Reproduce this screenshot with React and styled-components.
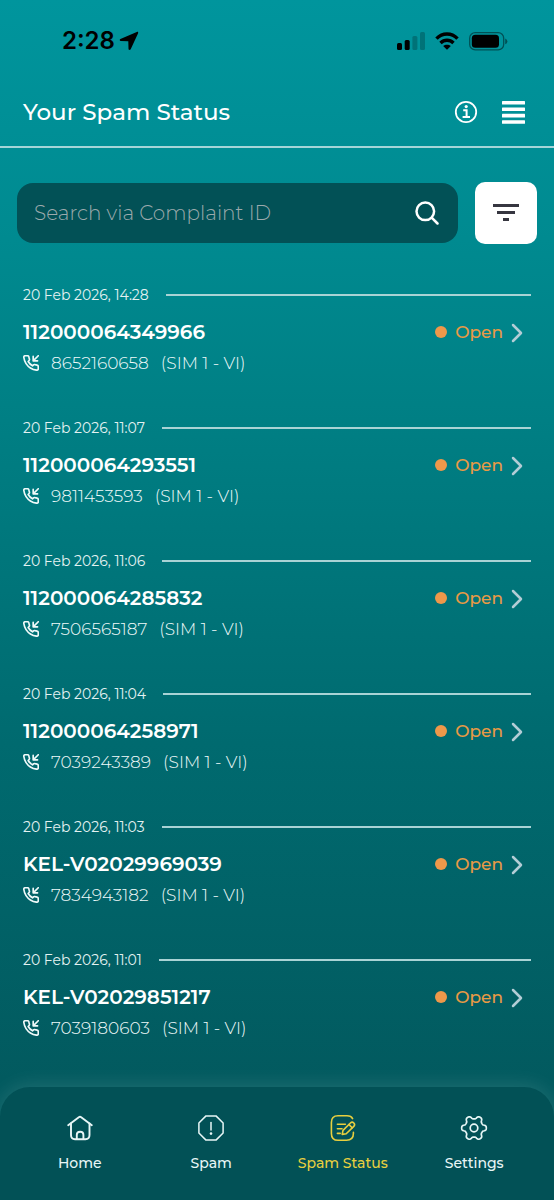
import React from 'react';
import styled, { createGlobalStyle } from 'styled-components';

const complaints = [
  { id: '112000064349966', date: '20 Feb 2026, 14:28', phone: '8652160658' },
  { id: '112000064293551', date: '20 Feb 2026, 11:07', phone: '9811453593' },
  { id: '112000064285832', date: '20 Feb 2026, 11:06', phone: '7506565187' },
  { id: '112000064258971', date: '20 Feb 2026, 11:04', phone: '7039243389' },
  { id: 'KEL-V02029969039', date: '20 Feb 2026, 11:03', phone: '7834943182' },
  { id: 'KEL-V02029851217', date: '20 Feb 2026, 11:01', phone: '7039180603' },
];

const LocationIcon = () => (
  <svg width="20" height="20" viewBox="0 0 20 20" aria-hidden="true">
    <path d="M17.8 0.9 L1.4 8 C0.3 8.6 0.6 10.1 1.8 10.1 L9.3 10.3 L9.5 17.8 C9.6 19.2 11.1 19.4 11.7 18.2 L19.1 2.2 C19.5 1.2 18.8 0.5 17.8 0.9 Z" />
  </svg>
);

const SignalIcon = () => (
  <svg width="28" height="18" viewBox="0 0 28 18" aria-hidden="true">
    <rect x="0" y="11" width="5" height="7" rx="1.5" />
    <rect x="7.7" y="8" width="5" height="10" rx="1.5" />
    <g opacity="0.22">
      <rect x="15.4" y="4" width="5" height="14" rx="1.5" />
      <rect x="23" y="0" width="5" height="18" rx="1.5" />
    </g>
  </svg>
);

const WifiIcon = () => (
  <svg width="24" height="18" viewBox="0 0 24 18" aria-hidden="true">
    <g fill="none" stroke="#000" strokeWidth="3.4">
      <path d="M1.5 6.7 C7.4 0.5 16.6 0.5 22.5 6.7" />
      <path d="M5.5 11 C9.3 7.3 14.7 7.3 18.5 11" />
    </g>
    <path d="M8.2 14 C10.2 12.2 13.8 12.2 15.8 14 L12.6 17.3 Q12 17.9 11.4 17.3 Z" />
  </svg>
);

const BatteryIcon = () => (
  <svg width="39" height="19" viewBox="0 0 39 19" aria-hidden="true">
    <rect x="0.7" y="0.7" width="34" height="17.2" rx="5.5" fill="none" stroke="#000" strokeWidth="1.3" opacity="0.45" />
    <rect x="2.8" y="2.8" width="27.2" height="13" rx="3.5" />
    <path d="M36.2 6.5 Q38.4 7.4 38.4 9.4 Q38.4 11.4 36.2 12.2 Z" opacity="0.45" />
  </svg>
);

const InfoIcon = () => (
  <svg width="24" height="24" viewBox="0 0 24 24" fill="none" stroke="#fff" aria-hidden="true">
    <circle cx="12" cy="12" r="10.2" strokeWidth="1.8" />
    <path d="M9.2 10.3 H12.6 V16.6 M8.6 17 H16" strokeWidth="2" />
    <circle cx="12.2" cy="6.6" r="1.6" fill="#fff" stroke="none" />
  </svg>
);

const MenuIcon = () => (
  <svg width="24" height="24" viewBox="0 0 24 24" fill="#fff" aria-hidden="true">
    <rect x="1" y="1" width="23" height="3.6" rx="0.5" />
    <rect x="1" y="7.4" width="23" height="3.6" rx="0.5" />
    <rect x="1" y="13.8" width="23" height="3.6" rx="0.5" />
    <rect x="1" y="20.2" width="23" height="3.6" rx="0.5" />
  </svg>
);

const SearchIcon = () => (
  <svg width="24" height="24" viewBox="0 0 24 24" fill="none" stroke="#fff" strokeWidth="2.5" strokeLinecap="round" aria-hidden="true">
    <circle cx="10.3" cy="10.3" r="8.8" />
    <path d="M16.9 16.9 L22.5 22.5" />
  </svg>
);

const FilterIcon = () => (
  <svg width="26" height="18" viewBox="0 0 26 18" fill="#363640" aria-hidden="true">
    <rect x="0" y="0" width="26" height="3" />
    <rect x="4" y="7" width="18" height="3" />
    <rect x="10" y="14" width="6" height="3" />
  </svg>
);

const IncomingCallIcon = () => (
  <svg width="16" height="16" viewBox="1 1 22 22" fill="none" stroke="currentColor" strokeWidth="2.3" strokeLinecap="round" strokeLinejoin="round" aria-hidden="true">
    <path d="M22 2 L15 9 M15 3 V9 H21" />
    <path d="M22 16.9v3a2 2 0 0 1-2.2 2 19.8 19.8 0 0 1-8.6-3.1 19.5 19.5 0 0 1-6-6 19.8 19.8 0 0 1-3.1-8.7A2 2 0 0 1 4.1 2h3a2 2 0 0 1 2 1.7c.1 1 .4 1.9.7 2.8a2 2 0 0 1-.5 2.1L8.1 9.9a16 16 0 0 0 6 6l1.3-1.3a2 2 0 0 1 2.1-.4c.9.3 1.8.6 2.8.7a2 2 0 0 1 1.7 2z" />
  </svg>
);

const ChevronIcon = () => (
  <svg width="12" height="22" viewBox="0 0 12 22" fill="none" stroke="#b3cdd6" strokeWidth="2.5" strokeLinecap="round" strokeLinejoin="round" aria-hidden="true">
    <path d="M2 4 L10 12 L2 20" />
  </svg>
);

const HomeIcon = () => (
  <svg width="28" height="28" viewBox="0 0 28 28" fill="none" stroke="currentColor" strokeWidth="1.9" strokeLinecap="round" strokeLinejoin="round" aria-hidden="true">
    <path d="M2.2 11.2 L12.8 3.2 Q14 2.4 15.2 3.2 L25.8 11.2" />
    <path d="M5 9.5 V21 Q5 25.2 9 25.2 H19.5 Q23.5 25.2 23.5 21 V9.5" />
    <path d="M10.8 25 V20.8 Q10.8 17.8 14.2 17.8 Q17.4 17.8 17.4 20.8 V25" />
  </svg>
);

const SpamIcon = () => (
  <svg width="28" height="28" viewBox="0 0 28 28" fill="none" stroke="currentColor" strokeWidth="1.5" strokeLinejoin="round" aria-hidden="true">
    <path d="M9 1.9 H19 L26.1 9 V19 L19 26.1 H9 L1.9 19 V9 Z" />
    <path d="M14 8.4 V16" strokeLinecap="round" />
    <circle cx="14" cy="19.6" r="1.3" fill="currentColor" stroke="none" />
  </svg>
);

const StatusIcon = () => (
  <svg width="28" height="28" viewBox="0 0 28 28" fill="none" stroke="currentColor" strokeWidth="1.6" strokeLinecap="round" strokeLinejoin="round" aria-hidden="true">
    <path d="M23.6 4.6 Q22.2 1.8 18 1.8 H9 Q2.4 1.8 2.4 8.6 V19.4 Q2.4 26.2 9 26.2 H17.6 Q24.4 26.2 24.4 19.6 V18.4" />
    <path d="M8.4 10.2 H16.4 M8.4 14.8 H13 M8.4 19.4 H11.2" />
    <path d="M13.2 20.4 L14 16.4 L21.4 9 Q23.2 7.4 24.8 9 Q26.4 10.6 24.8 12.4 L17.2 19.8 Z" />
    <path d="M20 10.6 L23.2 13.8" />
  </svg>
);

// six rounded teeth, flattened at the crest and the root
const gearPoints = Array.from({ length: 120 }, (_, i) => {
  const angle = (i * Math.PI) / 60;
  const radius = 10.7 + 1.7 * Math.tanh(1.8 * Math.cos(6 * angle));
  return `${(14 + radius * Math.cos(angle)).toFixed(2)},${(14 + radius * Math.sin(angle)).toFixed(2)}`;
}).join(' ');

const SettingsIcon = () => (
  <svg width="28" height="28" viewBox="0 0 28 28" fill="none" stroke="currentColor" strokeWidth="1.7" strokeLinejoin="round" aria-hidden="true">
    <polygon points={gearPoints} />
    <circle cx="14" cy="14" r="3.8" />
  </svg>
);

const tabs = [
  { label: 'Home', icon: <HomeIcon /> },
  { label: 'Spam', icon: <SpamIcon /> },
  { label: 'Spam Status', icon: <StatusIcon />, active: true },
  { label: 'Settings', icon: <SettingsIcon /> },
];

function Complaint({ id, date, phone }) {
  return (
    <Entry>
      <DateRow>
        <time>{date}</time>
        <Divider />
      </DateRow>
      <EntryLink href="#">
        <ComplaintId>{id}</ComplaintId>
        <Status>
          <Dot />
          Open
          <ChevronIcon />
        </Status>
      </EntryLink>
      <PhoneRow>
        <IncomingCallIcon />
        <span>{phone}</span>
        <span>(SIM 1 - VI)</span>
      </PhoneRow>
    </Entry>
  );
}

function App() {
  return (
    <>
      <GlobalStyle />
      <Page>
        <StatusBar>
          <Clock>
            2:28
            <LocationIcon />
          </Clock>
          <Indicators>
            <SignalIcon />
            <WifiIcon />
            <BatteryIcon />
          </Indicators>
        </StatusBar>
        <Header>
          <Title>Your Spam Status</Title>
          <HeaderActions>
            <IconButton aria-label="Information">
              <InfoIcon />
            </IconButton>
            <IconButton aria-label="Menu">
              <MenuIcon />
            </IconButton>
          </HeaderActions>
        </Header>
        <SearchRow>
          <SearchBox>
            <SearchInput type="text" aria-label="Search via Complaint ID" placeholder="Search via Complaint ID" />
            <IconButton aria-label="Search">
              <SearchIcon />
            </IconButton>
          </SearchBox>
          <FilterButton aria-label="Filter">
            <FilterIcon />
          </FilterButton>
        </SearchRow>
        <List>
          {complaints.map((item) => (
            <Complaint key={item.id} {...item} />
          ))}
        </List>
        <TabBar>
          {tabs.map((tab) => (
            <Tab key={tab.label} href="#" $active={tab.active} aria-current={tab.active ? 'page' : undefined}>
              {tab.icon}
              {tab.label}
            </Tab>
          ))}
        </TabBar>
      </Page>
    </>
  );
}

const GlobalStyle = createGlobalStyle`
  * {
    box-sizing: border-box;
  }
  body {
    margin: 0;
    background: #025156;
    font-family: Montserrat, Inter, sans-serif;
  }
  button, input {
    font-family: inherit;
  }
`;

const Page = styled.div`
  display: flex;
  flex-direction: column;
  min-height: 100vh;
  color: #fff;
  background: linear-gradient(180deg, #00959d 0%, #008a90 20%, #007f84 35%, #006a6f 62%, #025a5f 90%, #025a5f 100%);
`;

const StatusBar = styled.div`
  display: flex;
  align-items: center;
  justify-content: space-between;
  height: 76px;
  padding: 6px 46px 0 62px;
`;

const Clock = styled.div`
  display: flex;
  align-items: center;
  gap: 4px;
  color: #000;
  font-family: Inter, sans-serif;
  font-size: 24px;
  line-height: 28px;
  font-weight: 600;
`;

const Indicators = styled.div`
  display: flex;
  align-items: center;
  gap: 10px;
`;

const Header = styled.header`
  display: flex;
  align-items: center;
  justify-content: space-between;
  height: 72px;
  padding: 1px 29px 0 23px;
  border-bottom: 2px solid #a4d5d8;
`;

const Title = styled.h1`
  margin: 0;
  font-size: 23px;
  line-height: 28px;
  font-weight: 500;
`;

const HeaderActions = styled.div`
  display: flex;
  gap: 23px;
`;

const IconButton = styled.button`
  display: flex;
  padding: 0;
  border: 0;
  background: none;
  cursor: pointer;
`;

const SearchRow = styled.div`
  display: flex;
  align-items: center;
  gap: 17px;
  padding: 34px 17px 40px;
`;

const SearchBox = styled.div`
  display: flex;
  flex: 1;
  align-items: center;
  height: 60px;
  padding: 0 19px 0 17px;
  border-radius: 16px;
  background: #025156;
`;

const SearchInput = styled.input`
  flex: 1;
  min-width: 0;
  padding: 0;
  border: 0;
  outline: 0;
  background: none;
  color: #fff;
  font-size: 20px;
  line-height: 28px;
  font-weight: 300;
  &::placeholder {
    color: #9caaad;
    opacity: 1;
  }
`;

const FilterButton = styled.button`
  display: flex;
  align-items: center;
  justify-content: center;
  width: 62px;
  height: 62px;
  padding: 0;
  border: 0;
  border-radius: 10px;
  background: #fff;
  cursor: pointer;
`;

const List = styled.ul`
  flex: 1;
  margin: 0;
  padding: 0 23px;
  list-style: none;
`;

const Entry = styled.li`
  height: 133px;
`;

const DateRow = styled.div`
  display: flex;
  align-items: center;
  gap: 17px;
  font-size: 14px;
  line-height: 22px;
  color: #e4f2f2;
`;

const Divider = styled.span`
  flex: 1;
  height: 2px;
  background: #a9d3d5;
`;

const EntryLink = styled.a`
  display: flex;
  align-items: center;
  justify-content: space-between;
  margin-top: 12px;
  padding-right: 8px;
  color: inherit;
  text-decoration: none;
`;

const ComplaintId = styled.span`
  font-size: 20px;
  line-height: 28px;
  font-weight: 600;
`;

const Status = styled.span`
  display: flex;
  align-items: center;
  gap: 8px;
  color: #e99a45;
  font-size: 17px;
  line-height: 28px;
  font-weight: 500;
`;

const Dot = styled.span`
  width: 12px;
  height: 12px;
  border-radius: 50%;
  background: #ee984a;
`;

const PhoneRow = styled.div`
  display: flex;
  align-items: center;
  gap: 12px;
  margin-top: 4px;
  font-size: 17px;
  line-height: 26px;
  font-weight: 300;
  color: #f0fafa;
`;

const TabBar = styled.nav`
  display: flex;
  height: 113px;
  padding: 27px 14px 0;
  border-radius: 30px 30px 0 0;
  background: #025156;
  box-shadow: 0 -2px 20px rgba(255, 255, 255, 0.12);
`;

const Tab = styled.a`
  display: flex;
  flex: 1;
  flex-direction: column;
  align-items: center;
  gap: 11px;
  color: ${(props) => (props.$active ? '#e8cf3f' : '#e8f6f6')};
  font-size: 14px;
  line-height: 20px;
  font-weight: 500;
  text-decoration: none;
`;

export default App;
